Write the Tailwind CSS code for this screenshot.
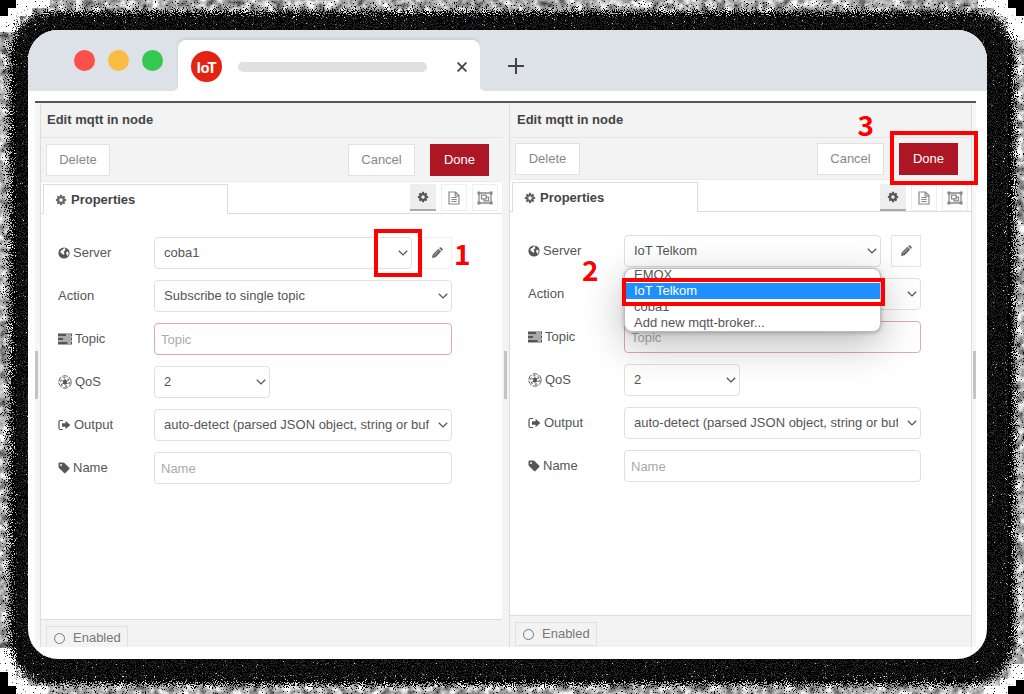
<!DOCTYPE html>
<html lang="en">
<head>
<meta charset="utf-8">
<meta name="viewport" content="width=device-width, initial-scale=1">
<title>Edit mqtt in node</title>
<script src="https://cdn.jsdelivr.net/npm/@tailwindcss/browser@4"></script>
</head>
<body class="bg-white font-['Liberation_Sans',Arial,sans-serif] text-[13px] leading-4 text-[#555]">

<!-- Shared icons -->
<svg class="hidden" aria-hidden="true">
  <symbol id="gear" viewBox="0 0 1792 1792"><path fill="currentColor" d="M1152 896q0-106-75-181t-181-75-181 75-75 181 75 181 181 75 181-75 75-181zm512-109v222q0 12-8 23t-20 13l-185 28q-19 54-39 91 35 50 107 138 10 12 10 25t-9 23q-27 37-99 108t-94 71q-12 0-26-9l-138-108q-44 23-91 38-16 136-29 186-7 28-36 28h-222q-14 0-24.5-8.5t-11.5-21.5l-28-184q-49-16-90-37l-141 107q-10 9-25 9-14 0-25-11-126-114-165-168-7-10-7-23 0-12 8-23 15-21 51-66.5t54-70.5q-27-50-41-99l-183-27q-13-2-21-12.5t-8-23.5v-222q0-12 8-23t19-13l186-28q14-46 39-92-40-57-107-138-10-12-10-24 0-10 9-23 26-36 98.5-107.5t94.5-71.5q13 0 26 10l138 107q44-23 91-38 16-136 29-186 7-28 36-28h222q14 0 24.5 8.5t11.5 21.5l28 184q49 16 90 37l142-107q9-9 24-9 13 0 25 10 129 119 165 170 7 8 7 22 0 12-8 23-15 21-51 66.5t-54 70.5q26 50 41 98l183 28q13 2 21 12.5t8 23.5z"/></symbol>
  <symbol id="doc" viewBox="0 0 12 14"><path fill="none" stroke="currentColor" stroke-width="1.200" d="M1 1h6.500l3.500 3.500V13H1zM7.200 1v3.800H11M3.300 6.500h5.400M3.300 8.500h5.400M3.300 10.500h5.400"/></symbol>
  <symbol id="group" viewBox="0 0 16 14"><path fill="none" stroke="currentColor" stroke-width="1.300" d="M2 2h12v10H2zM4.500 4.200h4.600v3.600H4.500zM9.500 6.200h2v3.600H7V8.300"/><path fill="currentColor" d="M.4.400h3v3h-3zM12.600.400h3v3h-3zM.4 10.600h3v3h-3zM12.600 10.600h3v3h-3z"/></symbol>
  <symbol id="globe" viewBox="0 0 12 12"><circle cx="6" cy="6" r="5.600" fill="currentColor"/><path fill="#fff" d="M6 1.300l1.400-.1-.5 1.300.7.600-1.300.8-.8 1.100.9.700-.3 1.300-1 .9L4.400 6.800 2.900 5.900 2.300 4.800l.8-1.400 1.300-.7zM8.500 5l1.500-.4.600 1.600-.4 1.700-1.100 1-.2-1.400-.9-.8z"/></symbol>
  <symbol id="tasks" viewBox="0 0 14 12"><path fill="currentColor" d="M0 .5h14v3H0zM0 4.500h14v3H0zM0 8.500h14v3H0z"/><path fill="#fff" d="M8 1.500h5v1H8zM5 5.500h8v1H5zM9.500 9.500H13v1H9.500z"/></symbol>
  <symbol id="empire" viewBox="0 0 14 14"><circle cx="7" cy="7" r="6.200" fill="none" stroke="currentColor" stroke-width="1" stroke-dasharray="5.300 1.190"/><circle cx="7" cy="7" r="4.300" fill="none" stroke="currentColor" stroke-width="1.100" stroke-dasharray="2.200 2.300"/><path stroke="currentColor" stroke-width="1.200" d="M7 4v6M4.400 5.500l5.200 3M4.400 8.500l5.200-3"/><circle cx="7" cy="7" r="2" fill="currentColor"/></symbol>
  <symbol id="signout" viewBox="0 0 13 12"><path fill="none" stroke="currentColor" stroke-width="1.200" d="M5 1.500H2.400Q1 1.500 1 3v6q0 1.500 1.400 1.500H5"/><path fill="currentColor" d="M4 4.300h3.600V1.800L12.300 6l-4.700 4.200V7.700H4z"/></symbol>
  <symbol id="tag" viewBox="0 0 12 12"><path fill="currentColor" fill-rule="evenodd" d="M.5 1.500Q.5.500 1.500.500H5q1 0 1.700.7l4.600 4.500q.7.700 0 1.400L7.500 11q-.7.700-1.400 0L1.200 6.300Q.5 5.600.5 4.800zM3 2a1 1 0 1 0 0 2 1 1 0 0 0 0-2z"/></symbol>
  <symbol id="pencil" viewBox="0 0 12 12"><path fill="currentColor" d="M1 11l.7-3.600L7.400 1.800l2.800 2.800-5.600 5.700zM8.100 1.100l.7-.7q.7-.5 1.300 0l1.500 1.500q.5.600 0 1.300l-.7.700z"/><path stroke="#fff" stroke-width=".5" d="M3 8.300l5-4.900"/></symbol>
  <symbol id="chev" viewBox="0 0 10 6"><path fill="none" stroke="currentColor" stroke-width="1.300" d="M.8.800L5 4.900 9.200.800"/></symbol>
</svg>

<!-- Grainy shadow behind the browser window -->
<svg class="absolute inset-0 -z-10 size-full" viewBox="0 0 1024 694" preserveAspectRatio="none" aria-hidden="true">
  <defs>
    <filter id="grey" x="0" y="0" width="1" height="1" color-interpolation-filters="sRGB">
      <feTurbulence type="fractalNoise" baseFrequency=".12" numOctaves="4" seed="4"/>
      <feColorMatrix values="1.200 0 0 0 .1 1.200 0 0 0 .1 1.200 0 0 0 .1 0 0 0 0 1"/>
    </filter>
    <filter id="grain" filterUnits="userSpaceOnUse" x="0" y="0" width="1024" height="694" color-interpolation-filters="sRGB">
      <feGaussianBlur in="SourceAlpha" stdDeviation="6" result="soft"/>
      <feTurbulence type="fractalNoise" baseFrequency=".9" numOctaves="2" seed="9"/>
      <feColorMatrix values="0 0 0 0 0 0 0 0 0 0 0 0 0 0 0 1 0 0 0 0" result="noise"/>
      <feComposite in="soft" in2="noise" operator="arithmetic" k2="1" k3="2" k4="-1.420"/>
      <feComponentTransfer><feFuncA type="linear" slope="10"/></feComponentTransfer>
    </filter>
    <filter id="speck" x="0" y="0" width="1" height="1" color-interpolation-filters="sRGB">
      <feTurbulence type="fractalNoise" baseFrequency=".9" numOctaves="2" seed="21"/>
      <feColorMatrix values="0 0 0 0 .25 0 0 0 0 .25 0 0 0 0 .25 8 0 0 0 -4"/>
    </filter>
  </defs>
  <rect width="1024" height="694" filter="url(#grey)"/>
  <path fill="#fff" d="M0 0h50v8H32v8H20v16H0zM1024 0h-46v8h16v8h12v24h18zM0 694h48v-8H28v-8H16v-30H0zM1024 694h-40v-8h16v-8h12v-14h12z"/>
  <path d="M0 0h16v8H8v8H0zM1024 0h-16v8h8v8h8zM0 694h16v-8H8v-14H0zM1024 694h-16v-8h8v-6h8z"/>
  <rect x="10" y="12" width="1004" height="672" rx="44" filter="url(#grain)"/>
  <rect x="16" y="16" width="992" height="664" filter="url(#speck)" opacity=".7"/>
</svg>

<main class="flex min-h-screen pt-[30px] pr-[37px] pb-[35px] pl-7">
<div class="flex flex-1 flex-col overflow-hidden rounded-[30px] bg-white pb-3">

  <!-- Browser tab strip -->
  <header class="flex h-[61px] bg-[linear-gradient(#dde1e8_50%,#fff_50%)]">
    <div class="flex w-[150px] gap-[13px] rounded-br-[5px] bg-[#dde1e8] pt-5 pl-[46px]">
      <span class="size-[21px] rounded-full bg-[#fc504a]"></span>
      <span class="size-[21px] rounded-full bg-[#fbbc45]"></span>
      <span class="size-[21px] rounded-full bg-[#35c951]"></span>
    </div>
    <div class="mt-2.5 flex w-[302px] items-center rounded-t-lg bg-white pt-0.5 pr-[13px] pl-[13px] shadow-[0_-2px_3px_rgba(0,0,0,0.08)]">
      <span class="flex size-[31px] items-center justify-center rounded-full bg-[#e42313] font-[Lato,sans-serif] text-[15px] font-black text-white">IoT</span>
      <span class="mr-[30px] ml-4 h-2.5 flex-1 rounded-full bg-[#e0e0e0]"></span>
      <button type="button" aria-label="Close tab" class="text-[#444]"><svg class="size-2.5" viewBox="0 0 10 10"><path stroke="currentColor" stroke-width="1.800" d="M.6.600l8.800 8.800M9.400.600L.6 9.400"/></svg></button>
    </div>
    <div class="flex-1 rounded-bl-[5px] bg-[#dde1e8] pt-7 pl-7">
      <button type="button" aria-label="New tab" class="block text-[#444]"><svg class="size-4" viewBox="0 0 16 16"><path stroke="currentColor" stroke-width="2" d="M8 0v16M0 8h16"/></svg></button>
    </div>
  </header>

  <div class="mt-2.5 mr-[11px] ml-[7px] flex flex-1 border-t-2 border-[#555]">

    <div class="flex w-1.5 items-center border-r border-[#ddd] bg-[#f6f6f6]"><span class="h-12 w-[3px] bg-[#c4c4c4]"></span></div>

    <!-- Step 1 -->
    <section class="flex flex-1 flex-col">
      <h2 class="flex h-[35px] items-center border-b border-[#e4e4e4] bg-[#f3f3f3] pl-1.5 font-bold text-[#444]">Edit mqtt in node</h2>
      <div class="flex h-11 items-center border-b border-[#eaeaea] bg-[#f3f3f3] pr-[13px] pl-[5px] text-[#888]">
        <button type="button" class="h-8 w-16 border border-[#e2e2e2] bg-white">Delete</button>
        <button type="button" class="mr-[15px] ml-auto h-8 w-[67px] border border-[#e2e2e2] bg-white">Cancel</button>
        <button type="button" class="h-8 w-[59px] bg-[#ad1625] text-white">Done</button>
      </div>
      <div class="flex h-8 pt-0.5">
        <div class="w-0.5 border-b border-[#ddd]"></div>
        <button type="button" class="flex w-[185px] items-center gap-1 border border-b-0 border-[#ddd] bg-white pl-[11px] font-bold text-[#444]"><svg class="size-3 text-[#666]"><use href="#gear"/></svg>Properties</button>
        <div class="flex flex-1 justify-end gap-[5px] border-b border-[#ddd] pr-1 text-[#888]">
          <button type="button" aria-label="Properties" class="flex h-[27px] w-[26px] items-center justify-center border-b-2 border-[#aaa] bg-[#eee] text-[#555]"><svg class="size-3"><use href="#gear"/></svg></button>
          <button type="button" aria-label="Description" class="flex h-[27px] w-[26px] items-center justify-center border border-[#eee] bg-white"><svg class="h-3.5 w-3"><use href="#doc"/></svg></button>
          <button type="button" aria-label="Appearance" class="flex h-[27px] w-[26px] items-center justify-center border border-[#eee] bg-white"><svg class="h-3.5 w-4"><use href="#group"/></svg></button>
        </div>
      </div>
      <form class="flex flex-1 flex-col gap-[11px] pt-[23px] pr-[50px] pl-[17px]">
        <div class="flex h-8 items-center">
          <label for="a-server" class="flex w-24 shrink-0 items-center gap-[3px]"><svg class="size-3"><use href="#globe"/></svg>Server</label>
          <div class="relative flex h-8 min-w-0 flex-1">
            <select id="a-server" class="w-full appearance-none rounded border border-[#e0e0e0] bg-white pr-[22px] pl-[9px]"><option>coba1</option></select>
            <svg class="pointer-events-none absolute top-[13px] right-1 h-1.5 w-2.5"><use href="#chev"/></svg>
            <span class="pointer-events-none absolute -top-2 -right-2.5 h-12 w-12 border-4 border-[#f00]"></span>
          </div>
          <button type="button" aria-label="Edit server" class="ml-2.5 flex h-8 w-[30px] items-center justify-center border border-[#f0f0f0] bg-white text-[#666]"><svg class="size-3"><use href="#pencil"/></svg></button>
          <span class="relative w-0"><span class="absolute -top-3.5 left-0.5 font-['Noto_Sans_CJK_SC',sans-serif] text-[28px] leading-7 font-bold text-[#f00]">1</span></span>
        </div>
        <div class="flex h-8 items-center">
          <label for="a-action" class="w-24 shrink-0">Action</label>
          <div class="relative flex h-8 min-w-0 flex-1">
            <select id="a-action" class="w-full appearance-none rounded border border-[#e0e0e0] bg-white pr-[22px] pl-[9px]"><option>Subscribe to single topic</option></select>
            <svg class="pointer-events-none absolute top-[13px] right-1 h-1.5 w-2.5"><use href="#chev"/></svg>
          </div>
        </div>
        <div class="flex h-8 items-center">
          <label for="a-topic" class="flex w-24 shrink-0 items-center gap-[3px]"><svg class="h-3 w-3.5"><use href="#tasks"/></svg>Topic</label>
          <input id="a-topic" type="text" placeholder="Topic" class="h-8 min-w-0 flex-1 rounded border border-[#e3a9a9] bg-white px-1.5 placeholder:text-[#aaa]">
        </div>
        <div class="flex h-8 items-center">
          <label for="a-qos" class="flex w-24 shrink-0 items-center gap-[3px]"><svg class="size-3.5"><use href="#empire"/></svg>QoS</label>
          <div class="relative flex h-8 w-[116px]">
            <select id="a-qos" class="w-full appearance-none rounded border border-[#e0e0e0] bg-white pr-[22px] pl-[9px]"><option>2</option></select>
            <svg class="pointer-events-none absolute top-[13px] right-1 h-1.5 w-2.5"><use href="#chev"/></svg>
          </div>
        </div>
        <div class="flex h-8 items-center">
          <label for="a-output" class="flex w-24 shrink-0 items-center gap-[3px]"><svg class="h-3 w-[13px]"><use href="#signout"/></svg>Output</label>
          <div class="relative flex h-8 min-w-0 flex-1">
            <select id="a-output" class="w-full appearance-none rounded border border-[#e0e0e0] bg-white pr-[22px] pl-[9px]"><option>auto-detect (parsed JSON object, string or buffer)</option></select>
            <svg class="pointer-events-none absolute top-[13px] right-1 h-1.5 w-2.5"><use href="#chev"/></svg>
          </div>
        </div>
        <div class="flex h-8 items-center">
          <label for="a-name" class="flex w-24 shrink-0 items-center gap-[3px]"><svg class="size-3"><use href="#tag"/></svg>Name</label>
          <input id="a-name" type="text" placeholder="Name" class="h-8 min-w-0 flex-1 rounded border border-[#e0e0e0] bg-white px-1.5 placeholder:text-[#aaa]">
        </div>
      </form>
      <footer class="h-7 overflow-hidden border-t border-[#ddd] bg-[#f3f3f3] pt-1.5 pl-[5px] text-[#777]">
        <button type="button" class="flex h-6 w-[82px] items-center gap-2 border border-[#e0e0e0] pl-[7px]"><span class="size-[11px] rounded-full border border-[#777]"></span>Enabled</button>
      </footer>
    </section>

    <div class="flex w-2 items-center justify-center border-r border-[#ddd] bg-[#f3f3f3]"><span class="h-12 w-[3px] bg-[#c4c4c4]"></span></div>

    <!-- Steps 2 and 3 -->
    <section class="flex flex-1 flex-col">
      <h2 class="flex h-[35px] items-center border-b border-[#e4e4e4] bg-[#f3f3f3] pl-[7px] font-bold text-[#444]">Edit mqtt in node</h2>
      <div class="flex h-[42px] items-center border-b border-[#eaeaea] bg-[#f3f3f3] pr-[13px] pl-[5px] text-[#888]">
        <button type="button" class="h-8 w-[65px] border border-[#e2e2e2] bg-white">Delete</button>
        <button type="button" class="mr-[15px] ml-auto h-8 w-[67px] border border-[#e2e2e2] bg-white">Cancel</button>
        <div class="relative">
          <button type="button" class="block h-8 w-[59px] bg-[#ad1625] text-white">Done</button>
          <span class="pointer-events-none absolute -top-3 -right-5 -bottom-2.5 -left-[9px] border-4 border-[#f00]"></span>
          <span class="absolute -top-[33px] right-[84px] font-['Noto_Sans_CJK_SC',sans-serif] text-[28px] leading-7 font-bold text-[#f00]">3</span>
        </div>
      </div>
      <div class="flex h-8 pt-0.5">
        <div class="w-0.5 border-b border-[#ddd]"></div>
        <button type="button" class="flex w-[186px] items-center gap-1 border border-b-0 border-[#ddd] bg-white pl-[11px] font-bold text-[#444]"><svg class="size-3 text-[#666]"><use href="#gear"/></svg>Properties</button>
        <div class="flex flex-1 items-end justify-end gap-[5px] border-b border-[#ddd] pr-[3px] text-[#888]">
          <button type="button" aria-label="Properties" class="flex h-[27px] w-[26px] items-center justify-center border-b-2 border-[#aaa] bg-[#eee] text-[#555]"><svg class="size-3"><use href="#gear"/></svg></button>
          <button type="button" aria-label="Description" class="flex h-[27px] w-[26px] items-center justify-center border border-[#eee] bg-white"><svg class="h-3.5 w-3"><use href="#doc"/></svg></button>
          <button type="button" aria-label="Appearance" class="flex h-[27px] w-[26px] items-center justify-center border border-[#eee] bg-white"><svg class="h-3.5 w-4"><use href="#group"/></svg></button>
        </div>
      </div>
      <form class="flex flex-1 flex-col gap-[11px] pt-[23px] pr-[50px] pl-[18px]">
        <div class="flex h-8 items-center">
          <label for="b-server" class="flex w-24 shrink-0 items-center gap-[3px]"><svg class="size-3"><use href="#globe"/></svg>Server</label>
          <div class="relative z-10 flex h-8 min-w-0 flex-1">
            <select id="b-server" class="w-full appearance-none rounded border border-[#e0e0e0] bg-white pr-[22px] pl-[9px]"><option>IoT Telkom</option></select>
            <svg class="pointer-events-none absolute top-[13px] right-1 h-1.5 w-2.5"><use href="#chev"/></svg>
            <ul role="listbox" aria-label="Server" class="absolute inset-x-0 top-[33px] flex h-16 flex-col justify-end overflow-hidden rounded-lg border border-[#bbb] bg-white shadow-[0_12px_40px_rgba(0,0,0,0.28),0_1px_4px_rgba(0,0,0,0.25)]">
              <li role="option" class="h-4 shrink-0 pl-[9px]">EMQX</li>
              <li role="option" aria-selected="true" class="h-4 shrink-0 bg-[#1e8fff] pl-[9px] text-white">IoT Telkom</li>
              <li role="option" class="h-4 shrink-0 pl-[9px]">coba1</li>
              <li role="option" class="h-4 shrink-0 pl-[9px]">Add new mqtt-broker...</li>
            </ul>
            <span class="pointer-events-none absolute -right-1 -left-0.5 top-[43px] h-7 border-4 border-[#f00]"></span>
            <span class="absolute top-5 -left-[42px] font-['Noto_Sans_CJK_SC',sans-serif] text-[28px] leading-7 font-bold text-[#f00]">2</span>
          </div>
          <button type="button" aria-label="Edit server" class="ml-2.5 flex h-8 w-[30px] items-center justify-center border border-[#e4e4e4] bg-white text-[#666]"><svg class="size-3"><use href="#pencil"/></svg></button>
        </div>
        <div class="flex h-8 items-center">
          <label for="b-action" class="w-24 shrink-0">Action</label>
          <div class="relative flex h-8 min-w-0 flex-1">
            <select id="b-action" class="w-full appearance-none rounded border border-[#e0e0e0] bg-white pr-[22px] pl-[9px]"><option></option></select>
            <svg class="pointer-events-none absolute top-[13px] right-1 h-1.5 w-2.5"><use href="#chev"/></svg>
          </div>
        </div>
        <div class="flex h-8 items-center">
          <label for="b-topic" class="flex w-24 shrink-0 items-center gap-[3px]"><svg class="h-3 w-3.5"><use href="#tasks"/></svg>Topic</label>
          <input id="b-topic" type="text" placeholder="Topic" class="h-8 min-w-0 flex-1 rounded border border-[#e3a9a9] bg-white px-1.5 placeholder:text-[#aaa]">
        </div>
        <div class="flex h-8 items-center">
          <label for="b-qos" class="flex w-24 shrink-0 items-center gap-[3px]"><svg class="size-3.5"><use href="#empire"/></svg>QoS</label>
          <div class="relative flex h-8 w-[116px]">
            <select id="b-qos" class="w-full appearance-none rounded border border-[#e0e0e0] bg-white pr-[22px] pl-[9px]"><option>2</option></select>
            <svg class="pointer-events-none absolute top-[13px] right-1 h-1.5 w-2.5"><use href="#chev"/></svg>
          </div>
        </div>
        <div class="flex h-8 items-center">
          <label for="b-output" class="flex w-24 shrink-0 items-center gap-[3px]"><svg class="h-3 w-[13px]"><use href="#signout"/></svg>Output</label>
          <div class="relative flex h-8 min-w-0 flex-1">
            <select id="b-output" class="w-full appearance-none rounded border border-[#e0e0e0] bg-white pr-[22px] pl-[9px]"><option>auto-detect (parsed JSON object, string or buffer)</option></select>
            <svg class="pointer-events-none absolute top-[13px] right-1 h-1.5 w-2.5"><use href="#chev"/></svg>
          </div>
        </div>
        <div class="flex h-8 items-center">
          <label for="b-name" class="flex w-24 shrink-0 items-center gap-[3px]"><svg class="size-3"><use href="#tag"/></svg>Name</label>
          <input id="b-name" type="text" placeholder="Name" class="h-8 min-w-0 flex-1 rounded border border-[#e0e0e0] bg-white px-1.5 placeholder:text-[#aaa]">
        </div>
      </form>
      <footer class="h-8 border-t border-[#ddd] bg-[#f3f3f3] pt-1.5 pl-[5px] text-[#777]">
        <button type="button" class="flex h-6 w-[82px] items-center gap-2 border border-[#e0e0e0] pl-[7px]"><span class="size-[11px] rounded-full border border-[#777]"></span>Enabled</button>
      </footer>
    </section>

    <div class="flex w-[5px] items-center justify-end border-l border-[#ddd] bg-[#f6f6f6]"><span class="h-12 w-[3px] bg-[#c4c4c4]"></span></div>
  </div>
</div>
</main>
</body>
</html>
